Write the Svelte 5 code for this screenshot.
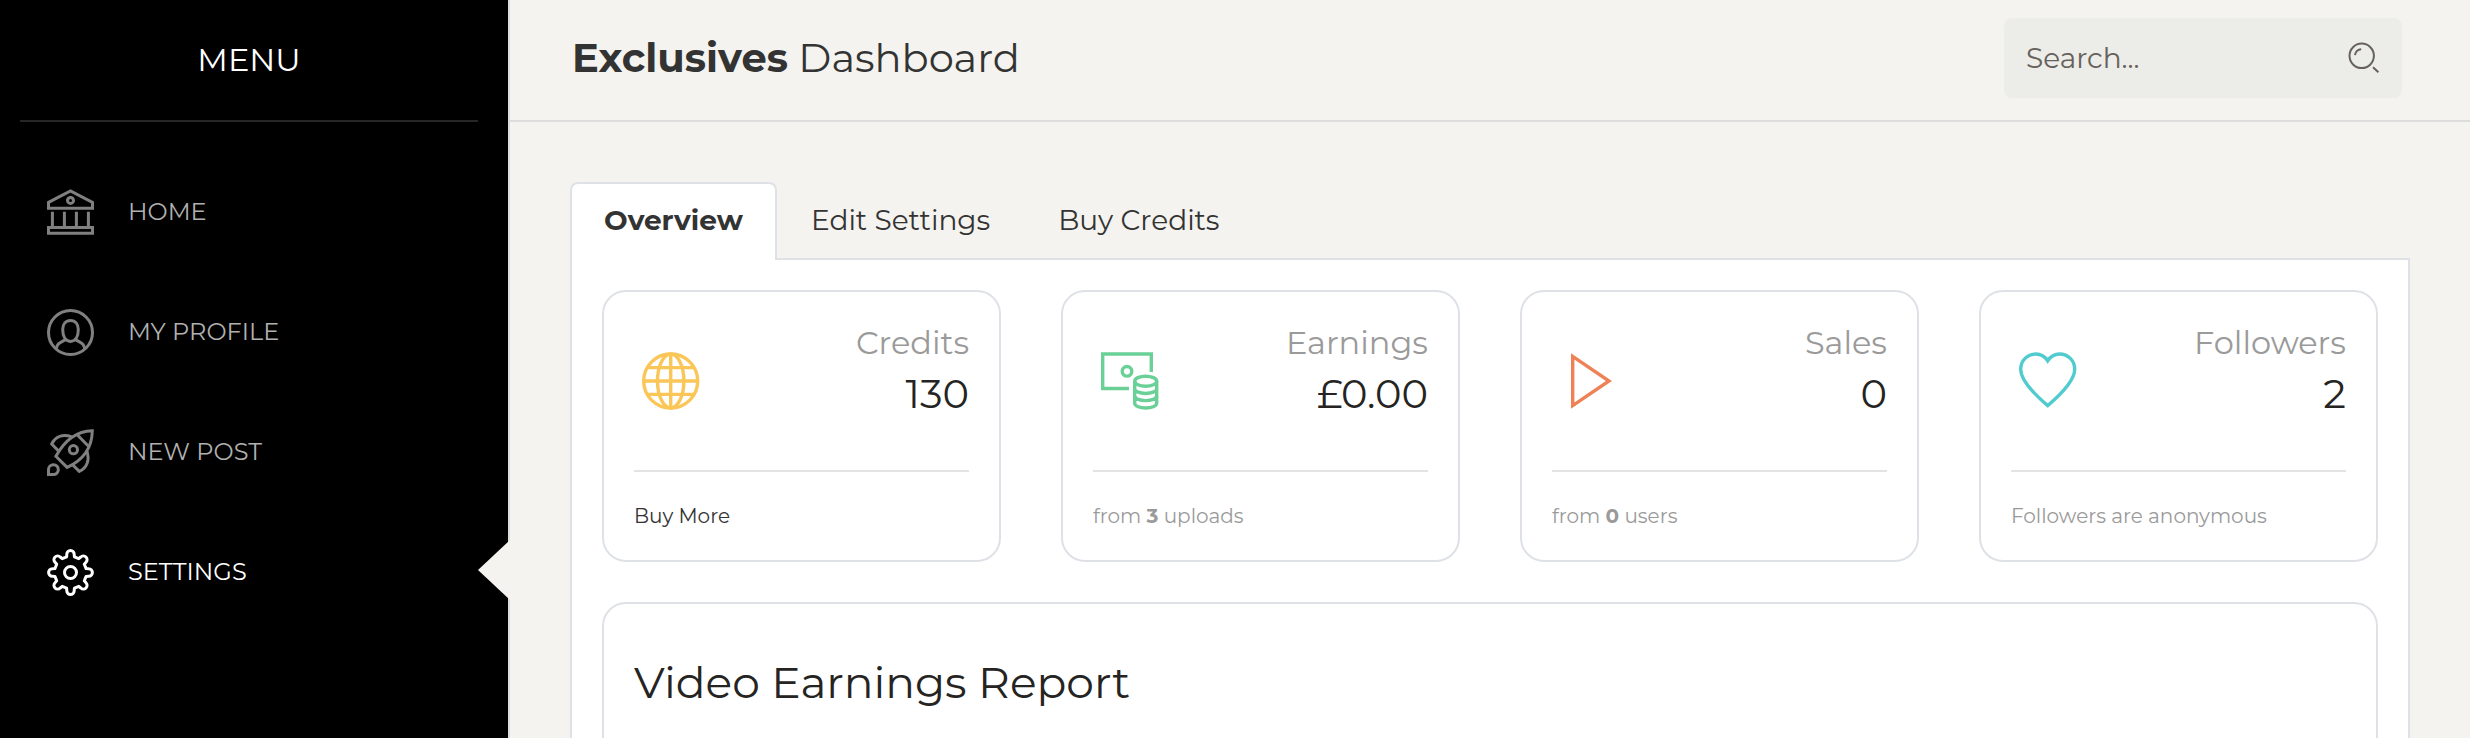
<script>
  const menu = [
    { id: 'home', label: 'HOME' },
    { id: 'profile', label: 'MY PROFILE' },
    { id: 'post', label: 'NEW POST' },
    { id: 'settings', label: 'SETTINGS' }
  ];
  const tabs = ['Overview', 'Edit Settings', 'Buy Credits'];
  const stats = [
    { id: 'globe', label: 'Credits', value: '130', link: 'Buy More' },
    { id: 'money', label: 'Earnings', value: '£0.00', count: 3, unit: 'uploads' },
    { id: 'play', label: 'Sales', value: '0', count: 0, unit: 'users' },
    { id: 'heart', label: 'Followers', value: '2', note: 'Followers are anonymous' }
  ];

  let page = $state('settings');
  let tab = $state('Overview');
  let query = $state('');

  // Outline of an eight-toothed cog centred on 23.5, 23.5
  function cog() {
    const at = (k, x, y) => {
      const a = (k * Math.PI) / 4;
      const px = 23.5 + x * Math.cos(a) - y * Math.sin(a);
      const py = 23.5 + x * Math.sin(a) + y * Math.cos(a);
      return `${px.toFixed(2)} ${py.toFixed(2)}`;
    };
    let d = '';
    for (let k = 0; k < 8; k++) {
      d += `${k ? 'L' : 'M'}${at(k, -3.9, -15.6)}L${at(k, -3.7, -18.2)}`;
      d += `A3.7 3.7 0 0 1 ${at(k, 3.7, -18.2)}L${at(k, 3.9, -15.6)}`;
    }
    return d + 'Z';
  }
</script>

<div class="app">
  <aside class="sidebar">
    <h2 class="menu-title">MENU</h2>
    <nav>
      {#each menu as item (item.id)}
        <a href={'#' + item.id} class="item" class:active={page === item.id} onclick={() => (page = item.id)}>
          <svg viewBox="0 0 47 47" aria-hidden="true">
            {#if item.id === 'home'}
              <path d="M1.5 13.4L23.5 2L45.5 13.4V19.3H1.5Z" />
              <circle cx="23.5" cy="11.4" r="3" />
              <path d="M5.4 22.7V38M17.4 22.7V38M29.4 22.7V38M41.4 22.7V38M1.5 38.5H45.5V44.3H1.5Z" />
            {:else if item.id === 'profile'}
              <circle cx="23.5" cy="23.5" r="22" />
              <path d="M15.7 20.5C15.7 15.2 18.8 11.5 23.5 11.5S31.3 15.2 31.3 20.5C31.3 28 28.3 32.4 23.5 32.4S15.7 28 15.7 20.5Z" />
              <path d="M9.3 40C9.6 34.5 13.5 33.4 18.8 30.6M37.7 40C37.4 34.5 33.5 33.4 28.2 30.6" />
            {:else if item.id === 'post'}
              <path d="M8.9 27.2C14.5 17 24.5 2.2 45.3 1.7C45 23 30.5 33.6 20.1 38.4Z" />
              <path d="M30.2 5.8L41.2 17M11.2 21.6L4.7 15C8.3 7.2 16 4.8 24.8 7.8M25.6 35.8L32.3 42.4C40.2 38.8 42.8 31 39.9 22.2" />
              <circle cx="26.4" cy="20.7" r="4.1" />
              <path d="M1.5 45.5V40.5A4.9 4.9 0 1 1 6.4 45.5Z" />
            {:else}
              <path d={cog()} stroke-linejoin="round" />
              <circle cx="23.5" cy="23.5" r="6" />
            {/if}
          </svg>
          <span>{item.label}</span>
        </a>
      {/each}
    </nav>
  </aside>

  <div class="content">
    <header>
      <h1><b>Exclusives</b> Dashboard</h1>
      <form class="search" role="search" onsubmit={(e) => e.preventDefault()}>
        <input type="text" aria-label="Search" placeholder="Search..." bind:value={query} />
        <button type="submit" aria-label="Submit search">
          <svg viewBox="0 0 32 32" aria-hidden="true">
            <circle cx="13.7" cy="13.8" r="12.2" />
            <path d="M7 13.2A6.6 6.6 0 0 1 13.2 7.2M25 25.2L30.4 30.2" />
          </svg>
        </button>
      </form>
    </header>

    <main>
      <div class="tabs" role="tablist">
        {#each tabs as name (name)}
          <button type="button" role="tab" aria-selected={tab === name} class:selected={tab === name} onclick={() => (tab = name)}>{name}</button>
        {/each}
      </div>

      <section class="panel">
        <div class="stats">
          {#each stats as s (s.id)}
            <article class="card">
              <div class="top">
                <svg class={s.id} viewBox="0 0 58 58" aria-hidden="true">
                  {#if s.id === 'globe'}
                    <circle cx="28.7" cy="29" r="27" />
                    <ellipse cx="28.7" cy="29" rx="13.2" ry="27" />
                    <path d="M28.7 2V56M1.7 29H55.7M5.3 15.6H52.1M5.3 42.4H52.1" />
                  {:else if s.id === 'money'}
                    <path d="M28 36.5H1.7V2H50.3V20" />
                    <circle cx="26" cy="19.3" r="4.8" />
                    <ellipse cx="44.7" cy="29.2" rx="11" ry="5" />
                    <path d="M33.7 29V51C33.7 57.7 55.7 57.7 55.7 51V29M33.7 36.4C33.7 43.1 55.7 43.1 55.7 36.4M33.7 43.6C33.7 50.3 55.7 50.3 55.7 43.6" />
                  {:else if s.id === 'play'}
                    <path d="M12.7 4.4V53.6L49 29Z" />
                  {:else}
                    <path d="M28.7 8.8C25.8 4.4 21.5 2 16.9 2C8.3 2 1.7 8.6 1.7 17.2C1.7 27.8 13 40.2 28.7 53.6C44.4 40.2 55.7 27.8 55.7 17.2C55.7 8.6 49.1 2 40.5 2C35.9 2 31.6 4.4 28.7 8.8Z" />
                  {/if}
                </svg>
                <div class="figures">
                  <div class="label">{s.label}</div>
                  <div class="value">{s.value}</div>
                </div>
              </div>
              <div class="foot">
                {#if s.link}
                  <a href="#credits">{s.link}</a>
                {:else if s.unit}
                  from <b>{s.count}</b> {s.unit}
                {:else}
                  {s.note}
                {/if}
              </div>
            </article>
          {/each}
        </div>

        <section class="card report">
          <h2>Video Earnings Report</h2>
        </section>
      </section>
    </main>
  </div>
</div>

<style>
  :global(body) {
    margin: 0;
    background: #f4f3ef;
  }
  .app {
    display: flex;
    height: 100vh;
    overflow: hidden;
    font-family: Montserrat, Inter, sans-serif;
    font-weight: 400;
    color: #252422;
  }
  .app * {
    box-sizing: border-box;
  }
  h1,
  h2 {
    margin: 0;
    font-weight: 400;
  }
  a {
    color: inherit;
    text-decoration: none;
  }
  button,
  input {
    font: inherit;
    color: inherit;
    border: 0;
    padding: 0;
    background: none;
  }
  svg {
    display: block;
    flex: none;
    fill: none;
    stroke: currentColor;
    stroke-width: 3;
  }

  .sidebar {
    flex: 0 0 510px;
    background: #000;
    border-right: 2px solid #ddd;
    color: #fff;
  }
  .menu-title {
    margin: 0 30px 30px 20px;
    border-bottom: 2px solid #262626;
    font-size: 32px;
    line-height: 120px;
    text-align: center;
  }
  .item {
    position: relative;
    display: flex;
    align-items: center;
    gap: 34px;
    height: 120px;
    padding-left: 47px;
    font-size: 24px;
    color: #b0b0b0;
  }
  .item span {
    padding-bottom: 2px;
  }
  .item svg {
    width: 47px;
    height: 47px;
    color: #808080;
  }
  .active,
  .active svg {
    color: #fff;
  }
  .active::after {
    content: '';
    position: absolute;
    top: 28px;
    right: -2px;
    border: 30px solid transparent;
    border-left-width: 0;
    border-right: 32px solid #f4f3ef;
  }

  .content {
    flex: 1;
    min-width: 0;
  }
  header {
    display: flex;
    align-items: center;
    justify-content: space-between;
    height: 122px;
    padding: 0 68px 4px 60px;
    border-bottom: 2px solid #ddd;
    color: #333;
  }
  h1 {
    padding: 0 0 2px 2px;
    font-size: 40px;
  }
  h1 b {
    font-weight: 700;
  }
  .search {
    display: flex;
    align-items: center;
    width: 398px;
    height: 80px;
    padding: 0 22px;
    border-radius: 8px;
    background: #ecede8;
    color: #66615b;
  }
  .search input {
    flex: 1;
    min-width: 0;
    font-size: 28px;
    outline: 0;
  }
  .search input::placeholder {
    color: #66615b;
    opacity: 1;
  }
  .search svg {
    width: 32px;
    height: 32px;
    stroke-width: 2;
  }

  main {
    padding: 60px 60px 0;
  }
  .tabs {
    display: flex;
  }
  .tabs button {
    height: 78px;
    margin-bottom: -2px;
    padding: 0 32px 4px;
    border: 2px solid transparent;
    border-bottom: 0;
    border-radius: 8px 8px 0 0;
    font-size: 28px;
    color: #333;
    cursor: pointer;
  }
  .tabs .selected {
    position: relative;
    border-color: #dee2e6;
    background: #fff;
    font-weight: 700;
  }
  .panel {
    padding: 30px;
    border: 2px solid #dee2e6;
    background: #fff;
  }
  .stats {
    display: grid;
    grid-template-columns: repeat(4, 1fr);
    gap: 60px;
    margin-bottom: 40px;
  }
  .card {
    padding: 30px;
    border: 2px solid #dee2e6;
    border-radius: 24px;
  }
  .top {
    display: flex;
    justify-content: space-between;
    padding: 0 0 46px 8px;
    border-bottom: 2px solid #e3e3e3;
  }
  .top svg {
    width: 58px;
    height: 58px;
    margin-top: 30px;
    stroke-width: 3.4;
  }
  .globe {
    color: #fbc658;
  }
  .money {
    color: #6bd098;
  }
  .play {
    color: #ef8157;
  }
  .heart {
    color: #51cbce;
  }
  .figures {
    text-align: right;
  }
  .label {
    font-size: 32px;
    line-height: 42px;
    color: #9a9a9a;
  }
  .value {
    font-size: 40px;
    line-height: 60px;
  }
  .foot {
    margin-top: 30px;
    font-size: 20px;
    line-height: 28px;
    color: #9a9a9a;
  }
  .foot a {
    color: #333;
  }
  .foot b {
    font-weight: 700;
  }
  .report {
    min-height: 400px;
    padding-top: 50px;
  }
  .report h2 {
    font-size: 44px;
    line-height: 56px;
  }
</style>
